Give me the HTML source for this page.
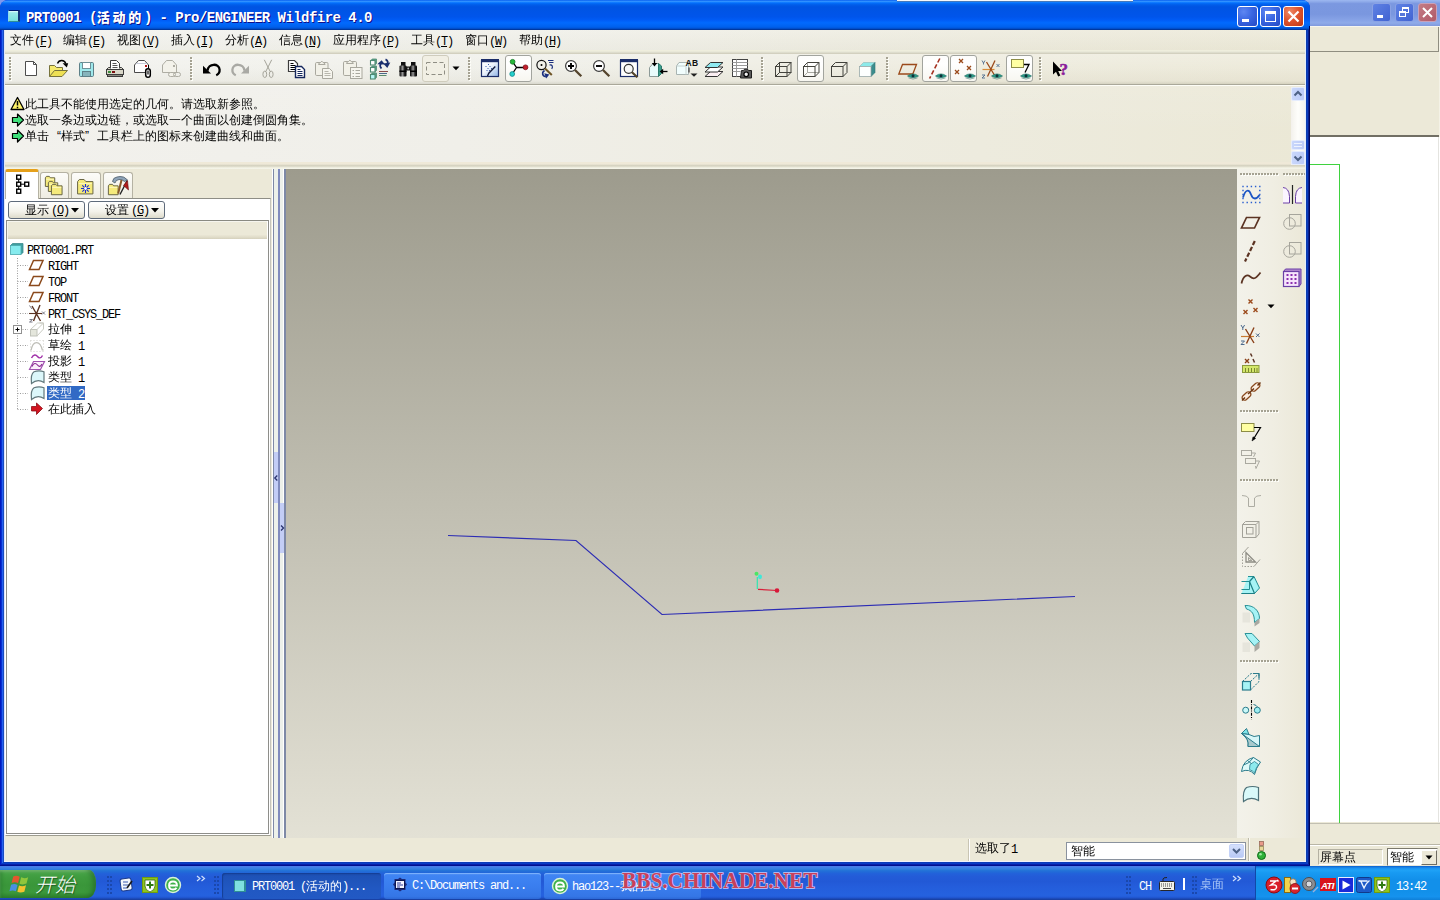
<!DOCTYPE html>
<html lang="zh-CN">
<head>
<meta charset="utf-8">
<title>PRT0001 (活动的) - Pro/ENGINEER Wildfire 4.0</title>
<style>
*{box-sizing:border-box;margin:0;padding:0}
html,body{width:1440px;height:900px;overflow:hidden;background:#ece9d8}
body{position:relative;font-family:"Liberation Sans","WenQuanYi Zen Hei","Noto Sans CJK SC",sans-serif;font-size:12px;color:#000;line-height:14px}
.abs{position:absolute}
svg{position:absolute;overflow:visible}
/* ---------- background window (right) ---------- */
#bgwin{left:1310px;top:0;width:130px;height:866px;background:#ece9d8}
#bgcorner{left:1300px;top:0;width:10px;height:26px;background:linear-gradient(#9db8f0 0,#8ba7e8 8%,#7b98e0 14%,#7a97df 55%,#86a2e6 75%,#8fabe9 88%,#8099dd 100%)}
#bgtitle{left:0;top:0;width:130px;height:26px;background:linear-gradient(#9db8f0 0,#8ba7e8 8%,#7b98e0 14%,#7a97df 55%,#86a2e6 75%,#8fabe9 88%,#8099dd 100%)}
#bgmenu{left:0;top:26px;width:129px;height:26px;background:#ece9d8;border-bottom:1px solid #8f8d80}
#bgwhite{left:0;top:137px;width:130px;height:685px;background:#fff}
#bgline{left:0;top:135px;width:129px;height:2px;background:#716f64}
/* ---------- main window ---------- */
#win{left:0;top:0;width:1310px;height:866px;background:#0831d9;border-radius:8px 8px 0 0}
#title{left:0;top:0;width:1310px;height:30px;border-radius:8px 8px 0 0;
 background:linear-gradient(#0058ee 0,#3593ff 4%,#288eff 6%,#127dff 8%,#036ffc 10%,#0262ee 14%,#0057e5 20%,#0054e3 24%,#0055eb 56%,#005bf5 66%,#026afe 76%,#0062ef 88%,#0056dc 94%,#0040ab 97%,#002e90 100%)}
#title .t{left:26px;top:10px;color:#fff;font-weight:bold;font-size:14px;line-height:16px;white-space:nowrap;text-shadow:1px 1px #0f1089;font-family:"Liberation Mono","Noto Sans CJK SC",monospace;letter-spacing:-.54px}
#title .t b{font-family:"Liberation Sans","Noto Sans CJK SC",sans-serif;font-size:13px;letter-spacing:2.7px}
#client{left:4px;top:30px;width:1302px;height:832px;background:#ece9d8}
.menu{top:33px;white-space:nowrap;font-size:12px}

/* generic text */
.m{font-family:"Liberation Mono",monospace;font-size:12px;letter-spacing:-1.2px}
.c{font-family:"Liberation Sans","WenQuanYi Zen Hei","Noto Sans CJK SC",sans-serif;font-size:12px;letter-spacing:0}
.mr{position:relative;top:1px}
.mi{position:absolute;top:33px;height:14px;white-space:nowrap;font-size:12px;line-height:14px}
.mi u{text-decoration:underline}
#menubar{left:4px;top:30px;width:1302px;height:20px;background:linear-gradient(rgba(255,255,255,.12),rgba(120,110,60,.03)),linear-gradient(90deg,#f3f3ef 0,#f0f0ea 40%,#edebde 75%,#ece9d8 100%)}
#menuline{left:4px;top:50px;width:1302px;height:4px;background:linear-gradient(#efeedd 0,#efeedd 25%,#e3e3d4 50%,#cdcab8 100%)}
#tbar{left:4px;top:54px;width:1302px;height:30px;background:linear-gradient(rgba(255,255,255,.18) 0,rgba(255,255,255,0) 45%,rgba(120,110,60,.05) 90%,rgba(90,85,50,.16) 100%),linear-gradient(90deg,#f3f3ef 0,#f0f0ea 40%,#eeecdf 75%,#edeada 100%)}
#tbline{left:4px;top:84px;width:1302px;height:2px;border-top:1px solid #aaa89a;background:#fdfdf6}
#msg{left:4px;top:86px;width:1302px;height:76px;background:linear-gradient(rgba(255,255,255,.1),rgba(255,255,255,0) 60%),linear-gradient(90deg,#f2f1ed 0,#f0efe9 35%,#edebde 75%,#ebe8d6 100%)}
#msgbot{left:4px;top:162px;width:1302px;height:7px;background:linear-gradient(#efe9d8 0,#efe9d8 28%,#dedbc9 43%,#cfccba 57%,#ecebdc 71%,#efeee0 85%,#f8f8ee 100%)}
.ml{position:absolute;left:25px;white-space:nowrap;height:14px;line-height:14px;font-size:12px}
.grip{position:absolute;width:3px;height:24px;top:57px;}
.grip::before{content:"";position:absolute;left:1px;top:1px;width:2px;height:24px;background-image:repeating-linear-gradient(#fdfdf8 0,#fdfdf8 2px,transparent 2px,transparent 3px)}
.grip::after{content:"";position:absolute;left:0;top:0;width:2px;height:24px;background-image:repeating-linear-gradient(#a5a292 0,#a5a292 2px,transparent 2px,transparent 3px)}
.pressed{position:absolute;top:55px;width:27px;height:27px;border:1px solid #a2a49e;border-radius:3px;background:linear-gradient(#fdfdfb,#fff 30%,#f7f6f0)}
.ic{position:absolute;width:24px;height:24px}
/* scrollbar of msg */
.sbtn{position:absolute;left:1291px;width:14px;height:14px;background:linear-gradient(90deg,#c9d7fb,#bccbf7);border:1px solid #e5ecfd;border-radius:2px}
/* nav panel */
#navwhite{left:5px;top:198px;width:266px;height:638px;background:#fff;border:1px solid #9d9c8f;border-top-color:#8e8e86;border-left-color:#fff;border-right-color:#c4c4bc}
#navinner{left:6px;top:239px;width:263px;height:595px;border:1px solid #8e8e8a;border-top:0;background:#fff}
#colhdr{left:6px;top:220px;width:263px;height:19px;background:linear-gradient(#ece9d8 0,#ece9d8 75%,#e0dcc9 90%,#d4d0bc 100%);border-top:1px solid #8a8a82;border-left:1px solid #8e8e8a;border-right:1px solid #8e8e8a;box-shadow:inset -1px 0 0 #fff,inset 1px 1px 0 #f6f5ee}
.btn{position:absolute;top:201px;height:18px;border:1px solid #5f6b7b;border-radius:3px;background:linear-gradient(#fff,#f3f2ea 60%,#dedbcb);white-space:nowrap;font-size:12px;line-height:15px;text-align:center}
.tab{position:absolute;top:172px;height:26px;width:31px;border:1px solid #b5b2a3;border-bottom:0;border-radius:3px 3px 0 0;background:linear-gradient(#fcfcf9,#efede2)}
.tab.sel{top:169px;height:30px;background:#fff;border-top:3px solid #f5a623;border-color:#e5a01a #b5b2a3 #fff #b5b2a3}
.tr{position:absolute;white-space:nowrap;height:14px;line-height:14px;font-size:12px}
/* sash */
.vl{position:absolute;top:169px;height:669px}
/* graphics */
#gfx{left:286px;top:169px;width:951px;height:669px;background:linear-gradient(#9d9b8d,#e3e1d5)}
#rtb{left:1237px;top:169px;width:69px;height:669px;background:linear-gradient(90deg,#f3f2ea 0,#f0eee3 50%,#ebe8d8 100%)}
.hgrip{position:absolute;height:3px}
.hgrip::before{content:"";position:absolute;left:1px;top:1px;height:2px;width:100%;background-image:repeating-linear-gradient(90deg,#fdfdf8 0,#fdfdf8 2px,transparent 2px,transparent 3px)}
.hgrip::after{content:"";position:absolute;left:0;top:0;height:2px;width:100%;background-image:repeating-linear-gradient(90deg,#a5a292 0,#a5a292 2px,transparent 2px,transparent 3px)}
/* status */
#status{left:4px;top:838px;width:1302px;height:24px;background:#ece9d8}

.wb{position:absolute;top:6px;width:21px;height:21px;border:1px solid #fff;border-radius:3px;background:radial-gradient(circle at 30% 25%,#5d86f2 0,#3a66e2 45%,#2449c4 100%)}
.wb.x{background:radial-gradient(circle at 30% 25%,#ee8a68 0,#e0552f 45%,#bd3716 100%)}
.wb2{position:absolute;top:3px;width:19px;height:19px;border:1px solid #8aa2e4;border-radius:3px;background:linear-gradient(135deg,#5f82e4,#4163d2)}
.wb2.x{background:linear-gradient(135deg,#c47c86,#b05a68);border-color:#c9a0b8}
/* ---------- taskbar ---------- */
#task{left:0;top:866px;width:1440px;height:34px;background:linear-gradient(#4a7ae8 0,#4080e8 4%,#3080e0 9%,#2474d8 13%,#216bd8 17%,#2262da 22%,#235cd8 30%,#2259d6 45%,#245ddb 60%,#2562df 86%,#245fdc 89%,#2158d4 92%,#1d4ec0 95%,#1941a5 98%)}

#start{left:0;top:870px;width:96px;height:28px;border-radius:0 7px 9px 0/0 13px 13px 0;background:linear-gradient(#5fb25c 0,#4aa54a 10%,#3f9c3f 25%,#3a963a 55%,#3c993c 80%,#2e812e 100%);box-shadow:inset -4px 0 6px -2px #246a28,inset 0 2px 3px -1px #8fd08a,inset 3px 0 4px -2px #2a7a2e}
#start .s{left:35px;top:4px;color:#fff;font-style:italic;font-size:20px;line-height:22px;font-family:"Liberation Sans","Noto Sans CJK SC",sans-serif;font-weight:300;text-shadow:1px 1px 1px #1d5a22;white-space:nowrap;letter-spacing:0}
.tbtn{position:absolute;top:873px;height:26px;border-radius:3px;color:#fff;white-space:nowrap}
.tbtn .tx{position:absolute;top:6px;height:14px;line-height:14px}
.tgrip{position:absolute;top:876px;width:5px;height:20px;background-image:radial-gradient(circle at 1px 1px,#1a48ad 0,#1a48ad 1px,transparent 1.3px);background-size:3px 4px}
#tray{left:1255px;top:866px;width:185px;height:34px;background:linear-gradient(#0c5fcb 0,#1b8ff0 6%,#1fa2f6 12%,#189af2 20%,#1290ea 40%,#1290ea 75%,#1592ee 90%,#0f7fd8 100%);border-left:1px solid #1148a8}
</style>
</head>
<body>
<div id="bgcorner" class="abs"></div>
<div class="abs" style="left:0;top:0;width:10px;height:10px;background:#7f99ee"></div>
<div id="bgwin" class="abs">
  <div id="bgtitle" class="abs"></div>
  <div id="bgmenu" class="abs"></div>
  <div id="bgline" class="abs"></div>
  <div id="bgwhite" class="abs"></div>

  <div class="abs" style="left:0;top:26px;width:130px;height:1px;background:#f7f6ee"></div>
  <div class="abs" style="left:128px;top:27px;width:1px;height:25px;background:#8f8d80"></div>
  <div class="abs" style="left:129px;top:27px;width:1px;height:110px;background:#f4f2e6"></div>
  <div class="abs" style="left:128px;top:137px;width:1px;height:686px;background:#e4e4e0"></div>
  <div class="wb2" style="left:62px"><div class="abs" style="left:4px;top:11px;width:6px;height:3px;background:#fff"></div></div>
  <div class="wb2" style="left:85px"><div class="abs" style="left:6px;top:3px;width:7px;height:6px;border:1px solid #fff;border-top-width:2px"></div><div class="abs" style="left:3px;top:7px;width:7px;height:6px;border:1px solid #fff;border-top-width:2px;background:#5878da"></div></div>
  <div class="wb2 x" style="left:108px"><svg width="17" height="17" viewBox="0 0 17 17" style="left:0;top:0"><path d="M4,4L13,13M13,4L4,13" stroke="#fff" stroke-width="2"/></svg></div>
  <div class="abs" style="left:0;top:164px;width:30px;height:1px;background:#3fd23f"></div>
  <div class="abs" style="left:29px;top:164px;width:1px;height:659px;background:#3fd23f"></div>
  <div class="abs" style="left:0;top:823px;width:130px;height:1px;background:#c2c0b2"></div>
  <div class="abs" style="left:0;top:844px;width:130px;height:2px;border-top:1px solid #b9b6a6;border-bottom:1px solid #fff"></div>
  <div class="abs" style="left:8px;top:849px;width:65px;height:16px;border:1px solid #b4b1a2;border-right-color:#fff;border-bottom-color:#fff"></div>
  <div class="tr c" style="left:10px;top:850px">屏幕点</div>
  <div class="abs" style="left:77px;top:848px;width:51px;height:18px;background:#fff;border:1px solid #7b796c;border-right-color:#e8e6da;border-bottom-color:#e8e6da"></div>
  <div class="tr c" style="left:80px;top:850px">智能</div>
  <div class="abs" style="left:111px;top:850px;width:16px;height:15px;background:#ece9d8;border:1px solid #fff;border-right-color:#6f6d62;border-bottom-color:#6f6d62"><svg width="14" height="13" viewBox="0 0 14 13" style="left:0;top:0"><path d="M3.500,4.500H10.500L7,8.500Z" fill="#000"/></svg></div>
</div>
<div id="win" class="abs">
  <div id="title" class="abs"><span class="abs t" id="ttxt">PRT0001 (<b>活动的</b>) - Pro/ENGINEER Wildfire 4.0</span></div>
  
<div class="abs" style="left:8px;top:10px;width:12px;height:12px;background:linear-gradient(#e8ffff 0,#9aeaea 18%,#78e0dc 100%);border:1px solid #2f8f95;border-top-color:#001a70;border-left-color:#8fd8ee;border-right:2px solid #12357c;border-radius:1px"></div>
<div class="wb" style="left:1237px"><div class="abs" style="left:4px;top:12px;width:7px;height:3px;background:#fff"></div></div>
<div class="wb" style="left:1260px"><div class="abs" style="left:4px;top:4px;width:11px;height:11px;border:1px solid #fff;border-top-width:3px"></div></div>
<div class="wb x" style="left:1283px"><svg width="19" height="19" viewBox="0 0 19 19" style="left:0;top:0"><path d="M4.500,4.500L14.500,14.500M14.500,4.500L4.500,14.500" stroke="#fff" stroke-width="2.200"/></svg></div>
<div id="client" class="abs"></div>

<!-- menu bar -->
<div id="menubar" class="abs"></div>
<div class="mi" style="left:10px"><span class="c">文件</span><span class="m mr">(<u>F</u>)</span></div>
<div class="mi" style="left:63px"><span class="c">编辑</span><span class="m mr">(<u>E</u>)</span></div>
<div class="mi" style="left:117px"><span class="c">视图</span><span class="m mr">(<u>V</u>)</span></div>
<div class="mi" style="left:171px"><span class="c">插入</span><span class="m mr">(<u>I</u>)</span></div>
<div class="mi" style="left:225px"><span class="c">分析</span><span class="m mr">(<u>A</u>)</span></div>
<div class="mi" style="left:279px"><span class="c">信息</span><span class="m mr">(<u>N</u>)</span></div>
<div class="mi" style="left:333px"><span class="c">应用程序</span><span class="m mr">(<u>P</u>)</span></div>
<div class="mi" style="left:411px"><span class="c">工具</span><span class="m mr">(<u>T</u>)</span></div>
<div class="mi" style="left:465px"><span class="c">窗口</span><span class="m mr">(<u>W</u>)</span></div>
<div class="mi" style="left:519px"><span class="c">帮助</span><span class="m mr">(<u>H</u>)</span></div>

<div id="menuline" class="abs"></div>
<div id="tbar" class="abs"></div>
<div id="tbline" class="abs"></div>
<div class="grip" style="left:9px"></div><div class="grip" style="left:190px"></div><div class="grip" style="left:468px"></div><div class="grip" style="left:761px"></div><div class="grip" style="left:886px"></div><div class="grip" style="left:1039px"></div>
<div class="pressed" style="left:505px"></div><div class="pressed" style="left:797px"></div><div class="pressed" style="left:922px"></div><div class="pressed" style="left:950px"></div><div class="pressed" style="left:1006px"></div>
<div class="pressed" style="left:422px;background:#f1efe4;border-color:#cfccbd"></div>
<svg id="tbicons" width="1310" height="90" viewBox="0 0 1310 90" style="left:0;top:0" fill="none" stroke-linecap="butt">
<defs>
<g id="eye"><path d="M-5.500,0 Q0,-4.200 5.500,0 Q0,3.400 -5.500,0Z" fill="#2a9c88" stroke="#176a60" stroke-width=".6"/><circle cx="0" cy="-.2" r="1.500" fill="#0d3038"/><path d="M-4.600,1.800 Q0,4.400 4.600,1.800" stroke="#5a8a84" stroke-width=".7"/></g>
<linearGradient id="gRp" x1="0" y1="0" x2="1" y2="1"><stop offset="0" stop-color="#fff"/><stop offset=".45" stop-color="#eef4fc"/><stop offset="1" stop-color="#8fb4e6"/></linearGradient>
<linearGradient id="gBar" x1="0" y1="0" x2="1" y2="0"><stop offset="0" stop-color="#000"/><stop offset=".45" stop-color="#9a9a9a"/><stop offset=".7" stop-color="#222"/><stop offset="1" stop-color="#000"/></linearGradient>
</defs>
<!-- new -->
<path d="M25.5,61.5H33.5L36.5,64.5V75.5H25.5Z" fill="#fff" stroke="#4d4d4d"/><path d="M33.5,61.5V64.5H36.5" stroke="#4d4d4d"/>
<!-- open -->
<path d="M49.5,76.5V65.5H54.5L56.5,67.5H62.5V70.5" fill="#f6ea6e" stroke="#77733c"/>
<path d="M49.5,76.5L54.5,70.5H67.5L62,76.5Z" fill="#eee054" stroke="#77733c"/>
<path d="M57.5,63.5C59,59.5 64.5,59.5 65.8,63.6" stroke="#000" stroke-width="1.4"/><path d="M62.6,63.2H68.2L66.8,67.4Z" fill="#000"/>
<!-- save -->
<rect x="79.5" y="62.5" width="14" height="14" rx="1.2" fill="#9fe9ec" stroke="#5d8088"/>
<rect x="82.5" y="62.5" width="8" height="6" fill="#fff" stroke="#6f9298"/>
<rect x="82.5" y="71.5" width="8" height="5" fill="#86b4bc" stroke="#5d8088"/>
<!-- print -->
<path d="M110.500,68.500V60.500H116.500L119.500,63.500V68.500" fill="#fff" stroke="#3c3c3c"/>
<path d="M112.500,63.500h4M112.500,65.500h5M112.500,67.500h5" stroke="#555"/>
<path d="M106.500,74.500V69.500L108.500,67.500H110.500M119.500,67.500H121.500L123.500,69.500V74.500" fill="#d9d7c8" stroke="#3c3c3c"/>
<rect x="106.500" y="69.500" width="17" height="5" fill="#d9d7c8" stroke="#3c3c3c"/>
<rect x="107.500" y="74.500" width="15" height="2" fill="#8c8c80" stroke="#3c3c3c"/>
<rect x="108" y="71" width="3" height="2" fill="#3c8c3c"/><rect x="112" y="71" width="3" height="2" fill="#7a1010"/>
<!-- mail attach -->
<path d="M134.500,72.500V65.000L138.500,60.500H144.500L148.500,65.000V72.500Z" fill="#fff" stroke="#4a4a4a"/>
<path d="M136,63.500H147" stroke="#c8ccd8"/>
<rect x="145" y="65" width="2" height="2" fill="#b01818"/>
<path d="M148.500,65V68" stroke="#000"/>
<rect x="145.700" y="68.700" width="4.600" height="8.600" rx="2.300" fill="#fff" stroke="#000" stroke-width="1.500"/>
<path d="M148,70.500V74.500" stroke="#000" stroke-width="1.200"/>
<!-- mail link disabled -->
<path d="M162.500,72.500V65.000L166.500,60.500H172.500L176.500,65.000V72.500Z" fill="#f3f2ea" stroke="#aeada3"/>
<rect x="173" y="65" width="2" height="2" fill="#aeada3"/>
<rect x="168.500" y="72.500" width="7" height="4" rx="2" fill="#f3f2ea" stroke="#aeada3"/>
<rect x="173.500" y="72.500" width="7" height="4" rx="2" fill="none" stroke="#aeada3"/>
<!-- undo -->
<path d="M207.600,70.600C208,63.200 219.200,62.800 219.600,69.600C219.800,72.600 218.200,74.300 216.200,75.200" stroke="#000" stroke-width="2.300"/>
<path d="M203,65.800V73.600H211Z" fill="#000"/>
<!-- redo -->
<path d="M244.400,70.600C244,63.200 232.800,62.800 232.400,69.600C232.200,72.600 233.800,74.300 235.800,75.200" stroke="#a9a9a4" stroke-width="2.300"/>
<path d="M249,65.800V73.600H241Z" fill="#a9a9a4"/>
<!-- cut -->
<path d="M264.300,59.800L270.200,71.500M271.700,59.800L265.800,71.500" stroke="#a5a49a"/>
<ellipse cx="264.800" cy="74.300" rx="1.900" ry="3.200" stroke="#a5a49a"/><ellipse cx="271.200" cy="74.300" rx="1.900" ry="3.200" stroke="#a5a49a"/>
<!-- copy -->
<path d="M288.500,60.500H294.500L297.500,63.500V71.500H288.500Z" fill="#fff" stroke="#3c3c3c" stroke-width="1.200"/>
<path d="M290.500,63.500h3M290.500,65.500h5M290.500,67.500h5M290.500,69.500h5" stroke="#000"/>
<path d="M295.500,66.500H301.500L304.500,69.500V77.500H295.500Z" fill="#fff" stroke="#15275c" stroke-width="1.400"/>
<path d="M297.500,69.500h3M297.500,71.500h5M297.500,73.500h5M297.500,75.500h5" stroke="#15275c"/>
<!-- paste disabled -->
<rect x="315.500" y="62.500" width="12.500" height="13" rx="1.200" fill="#f2f1e8" stroke="#a9a89e"/>
<path d="M318.500,64.500Q319,62.500 320.500,62.500Q321.800,59.800 323.100,62.500Q324.600,62.500 325.100,64.500Z" fill="#f2f1e8" stroke="#a9a89e"/>
<path d="M322.500,68.500H329.500L332.500,71.500V78.500H322.500Z" fill="#f6f5ee" stroke="#a9a89e"/>
<path d="M324.500,71.500h4M324.500,73.500h6M324.500,75.500h6" stroke="#b8b7ad"/>
<!-- paste special disabled -->
<rect x="343.500" y="61.500" width="13" height="14" rx="1.200" fill="#f2f1e8" stroke="#a9a89e"/>
<path d="M346.500,63.500Q347,61.500 348.500,61.500Q349.900,58.800 351.300,61.500Q352.800,61.500 353.300,63.500Z" fill="#f2f1e8" stroke="#a9a89e"/>
<rect x="350.500" y="67.500" width="11.500" height="11" fill="#f6f5ee" stroke="#a9a89e"/>
<path d="M352.500,70.500h1.500M355.500,70.500h4.500M352.500,73.500h1.500M355.500,73.500h4.500M352.500,76.500h1.500M355.500,76.500h4.500" stroke="#a9a89e"/>
<!-- regen manager -->
<g stroke="#4d8a72" fill="#fff" stroke-width="1.100"><path d="M371,60.500l1.200,-1.500h4.300v4.300l-1.200,1.500" fill="#5fa48c" stroke-width=".8"/><rect x="370.500" y="60.500" width="4.500" height="4.500"/>
<path d="M371,67.500l1.200,-1.500h4.300v4.300l-1.200,1.500" fill="#5fa48c" stroke-width=".8"/><rect x="370.500" y="67.500" width="4.500" height="4.500"/>
<path d="M371,74.500l1.200,-1.500h4.300v4.300l-1.200,1.500" fill="#5fa48c" stroke-width=".8"/><rect x="370.500" y="74.500" width="4.500" height="4.500" fill="#b4f6f6"/></g>
<path d="M381.500,68.500C379.500,66.500 379.800,64 381.800,63" stroke="#1a2f6e" stroke-width="1.800"/><path d="M377.300,64.300L381.600,60.200L385,64.600Z" fill="#1a2f6e"/>
<path d="M385.500,59.400C388,60.500 388.400,63 386.800,64.500" stroke="#1a2f6e" stroke-width="1.800"/><path d="M383.200,63.400L390.300,62.500L387.300,68Z" fill="#1a2f6e"/>
<path d="M379,71.500h9" stroke="#8a4a4a"/><path d="M379,73.500h8" stroke="#4a6a8a"/><path d="M379,75.500h7.500" stroke="#5a8a6a"/>
<!-- binoculars -->
<rect x="401" y="62" width="4.500" height="5" fill="#111"/><rect x="411" y="62" width="4.500" height="5" fill="#111"/>
<rect x="399.500" y="65.500" width="7" height="11" rx="1" fill="url(#gBar)"/><rect x="410" y="65.500" width="7" height="11" rx="1" fill="url(#gBar)"/>
<rect x="399.500" y="70.500" width="7" height="1.500" fill="#000"/><rect x="410" y="70.500" width="7" height="1.500" fill="#000"/>
<rect x="406" y="66.500" width="4.500" height="4" fill="#111"/><circle cx="408.200" cy="68.500" r=".9" fill="#bbb"/>
<!-- select -->
<rect x="426.500" y="62.500" width="18" height="12" stroke="#8f8e84" stroke-dasharray="4 2.500"/>
<path d="M452.500,66.500H459.500L456,70.200Z" fill="#000"/>
<!-- repaint -->
<rect x="481.500" y="60.500" width="17" height="16" fill="url(#gRp)" stroke="#1b2d69" stroke-width="1.200"/><rect x="481" y="59" width="18" height="3.200" fill="#1b2d69"/>
<path d="M487.500,76L488.800,73.200L495.300,66.500" stroke="#10183a" stroke-width="1.400"/>
<path d="M485.500,66.500h1M487.500,68.500h1M489.500,66.500h1M486.500,70.500h1M489,70.500h1M491,68.500h1M488,64.500h1" stroke="#3f5fa8"/>
<!-- spin center -->
<path d="M512.600,61.800L516.500,67.500L512.200,74M516.500,67.500H525" stroke="#000" stroke-width="1.300"/>
<circle cx="512.600" cy="61.800" r="2.400" fill="#27b83a" stroke="#0f7a20" stroke-width=".8"/>
<circle cx="512.200" cy="74" r="2.400" fill="#25d0cc" stroke="#108a8a" stroke-width=".8"/>
<circle cx="525.500" cy="67.300" r="2.400" fill="#c41f2e" stroke="#7a0f18" stroke-width=".8"/>
<!-- orient mode -->
<circle cx="541.500" cy="65" r="4.600" stroke="#111" stroke-width="1.200"/><circle cx="541.500" cy="65" r="1" fill="#000"/>
<path d="M545,68.500L551.800,75" stroke="#6e5526" stroke-width="2"/>
<path d="M548,60.500h5.500M549,62.500h4.500" stroke="#1a2f7e"/><path d="M549.500,65c3,-.6 3.600,2 2.200,3.800" stroke="#1a2f7e" stroke-width="1.200"/>
<path d="M544.500,70.500C541.500,72.500 542.200,76.300 545.800,76.800" stroke="#1a2f7e" stroke-width="1.600"/><path d="M544.300,73.200L549.300,74.600L546.200,78.400Z" fill="#1a2f7e"/>
<!-- zoom in -->
<circle cx="571" cy="66" r="5.400" fill="#fff" stroke="#3a3a3a" stroke-width="1.200"/><path d="M568,66h6M571,63v6" stroke="#000" stroke-width="1.900"/>
<path d="M575,70L581.300,76.300" stroke="#54442c" stroke-width="2.300"/>
<!-- zoom out -->
<circle cx="599" cy="66" r="5.400" fill="#fff" stroke="#3a3a3a" stroke-width="1.200"/><path d="M596,66h6" stroke="#000" stroke-width="1.900"/>
<path d="M603,70L609.300,76.300" stroke="#54442c" stroke-width="2.300"/>
<!-- refit -->
<rect x="620.500" y="60.500" width="17" height="16" fill="#fff" stroke="#1b2d69" stroke-width="1.200"/><rect x="620" y="59" width="18" height="3.200" fill="#1b2d69"/>
<circle cx="628.700" cy="68.800" r="4.500" fill="#f7f7f7" stroke="#333" stroke-width="1.200"/><path d="M632,72.200L637.300,77.300" stroke="#54442c" stroke-width="2.200"/>
<!-- reorient -->
<path d="M649.500,76.500V67.500L653,63.500H658.500V76.500Z" fill="#e9fbfb" stroke="#8d9a98"/>
<path d="M658.500,63.500L661.500,66V73.500L658.500,76.500Z" fill="#3d9c8c" stroke="#2a7a6c"/>
<path d="M654.500,58.500V64" stroke="#000" stroke-width="1.300"/><path d="M651.800,63H657.200L654.500,66.400Z" fill="#000"/>
<path d="M667.500,71.500H662.500" stroke="#000" stroke-width="1.300"/><path d="M663.200,68.800V74.200L659.600,71.500Z" fill="#000"/>
<!-- saved view list -->
<path d="M676.500,74.500V66L679,62.500H688.500V74.500Z" fill="#f1fdfd" stroke="#a9b4b2"/><path d="M676.500,66H686L688.500,62.500M686,66V74.500" stroke="#c5d2d0"/>
<rect x="688" y="67.500" width="1.800" height="5" fill="#6a6a6a"/>
<text x="685.500" y="66" font-family="Liberation Sans,sans-serif" font-size="8.500" font-weight="bold" fill="#111" stroke="none" letter-spacing=".4">AB</text>
<path d="M690.500,73.500H697.500L694,76.800Z" fill="#222"/>
<!-- layers -->
<path d="M710.500,71.500H723L717.500,76.500H705Z" fill="#fbeef2" stroke="#333"/>
<path d="M710.500,67H723L717.500,72H705Z" fill="#fff" stroke="#333"/>
<path d="M710.500,62.500H723L717.500,67.500H705Z" fill="#8fe9f0" stroke="#333"/>
<!-- view manager -->
<rect x="732.500" y="59.500" width="15" height="17" fill="#fff" stroke="#444"/>
<path d="M732.500,62.500h15M732.500,65.500h15M732.500,68.500h15M732.500,71.500h8M736.500,59.500v17" stroke="#9a9a9a"/>
<path d="M741.500,70.500h2l1,-1.300h3l1,1.300h3v7.500h-11z" fill="#5a5a5a" stroke="#1e1e1e"/><circle cx="746.200" cy="74.300" r="2.300" fill="#f2f2f2" stroke="#000" stroke-width="1.200"/>
<!-- wireframe cube -->
<g stroke="#43433d" stroke-width="1"><rect x="775.500" y="66.500" width="11.500" height="10"/><rect x="779.500" y="62.500" width="11.500" height="10"/><path d="M775.500,66.500l4,-4M787,66.500l4,-4M775.500,76.500l4,-4M787,76.500l4,-4"/></g>
<!-- hidden line cube -->
<g stroke-width="1"><path d="M807.500,62.500V72.500H819M803.500,76.500l4,-4" stroke="#a7a7a0"/><g stroke="#43433d"><rect x="803.500" y="66.500" width="11.500" height="10"/><path d="M803.500,66.500l4,-4H819V72.500l-4,4M815,66.500l4,-4"/></g></g>
<!-- no hidden cube -->
<g stroke="#43433d" stroke-width="1"><rect x="831.500" y="66.500" width="11.500" height="10"/><path d="M831.500,66.500l4,-4H847V72.500l-4,4M843,66.500l4,-4"/></g>
<!-- shaded cube -->
<path d="M859.500,66.500l4,-4H875l-4,4Z" fill="#8deaea" stroke="#8fb9b9" stroke-width=".6"/>
<path d="M871,66.500l4,-4V72.500l-4,4Z" fill="#3b8d8d" stroke="#2d7272" stroke-width=".6"/>
<rect x="859.500" y="66.500" width="11.500" height="10" fill="#fdffff" stroke="#9aa" stroke-width=".8"/>
<!-- datum plane display -->
<path d="M902.500,64.500H916.500L912.800,74H898.800Z" stroke="#9b4a1b" stroke-width="1.300"/><use href="#eye" x="913" y="76"/>
<!-- axis display -->
<path d="M939.800,58.500L929.600,78.500" stroke="#a53221" stroke-width="1.600" stroke-dasharray="4.500 2.200"/><use href="#eye" x="941" y="76"/>
<!-- point display -->
<path d="M959,59l4,4m0,-4l-4,4M967,66l4,4m0,-4l-4,4M955,70l4,4m0,-4l-4,4" stroke="#9b4a1b" stroke-width="1.300"/><use href="#eye" x="970" y="76"/>
<!-- csys display -->
<path d="M982.500,69.500H994.500" stroke="#d88a36" stroke-width="1.200"/><path d="M986.500,62L995,76M995,60.500L987.500,76.500" stroke="#9b4a1b" stroke-width="1.300"/>
<path d="M982,60.500l1.500,2.500l1.500,-2.500M983.500,63v1.500M982,75h3l-3,3h3M996.500,64l3,3m0,-3l-3,3" stroke="#4d6b8d" stroke-width=".9"/><use href="#eye" x="997" y="76"/>
<!-- annotation display -->
<rect x="1011.500" y="59.500" width="12" height="8" fill="#ffffa2" stroke="#8d8d46"/><path d="M1024,64.500h5l-4,8" stroke="#000" stroke-width="1.300"/><use href="#eye" x="1026" y="76"/>
<!-- help -->
<path d="M1053,61.500V74.500L1056,71.800L1058.200,76.600L1060.300,75.600L1058.200,71H1062Z" fill="#000"/>
<text x="1059.500" y="75" font-family="Liberation Serif,serif" font-size="17" font-weight="bold" fill="#8a1a9a" stroke="#8a1a9a" stroke-width=".5">?</text>
</svg>

<!-- TOOLBAR-ICONS-END -->
<!-- message area -->
<div id="msg" class="abs"></div>
<div id="msgbot" class="abs"></div>
<div class="ml c" style="top:97px">此工具不能使用选定的几何。请选取新参照。</div>
<div class="ml c" style="top:113px">选取一条边或边链，或选取一个曲面以创建倒圆角集。</div>
<div class="ml c" style="top:129px">单击<span style="padding:0 0 0 8px">“</span>样式<span style="padding:0 8px 0 0">”</span>工具栏上的图标来创建曲线和曲面。</div>
<svg id="msgicons" width="30" height="60" viewBox="0 90 30 60" style="left:0;top:91px" fill="none">
<path d="M17.500,96.500L24,108.500H11Z" fill="#fff36a" stroke="#000" stroke-width="1.300" stroke-linejoin="round"/>
<path d="M17.500,100v4.500M17.500,105.800v1.400" stroke="#000" stroke-width="1.500"/>
<path d="M12.500,116.500H17.500V113L23.500,119L17.500,125V121.500H12.500Z" fill="#3fe07a" stroke="#000" stroke-width="1.200" stroke-linejoin="round"/>
<path d="M12.500,132.500H17.500V129L23.500,135L17.500,141V137.500H12.500Z" fill="#3fe07a" stroke="#000" stroke-width="1.200" stroke-linejoin="round"/>
</svg>
<div class="abs" style="left:1291px;top:87px;width:14px;height:78px;background:linear-gradient(90deg,#f3f1ec,#fefefb 50%,#f4f3ee)"></div>
<div class="sbtn" style="top:87px"><svg width="12" height="12" viewBox="0 0 12 12" style="left:0;top:0" fill="none"><path d="M2.500,7.500L6,4L9.500,7.500" stroke="#4d6185" stroke-width="2"/></svg></div>
<div class="sbtn" style="top:151px"><svg width="12" height="12" viewBox="0 0 12 12" style="left:0;top:0" fill="none"><path d="M2.500,4.500L6,8L9.500,4.500" stroke="#4d6185" stroke-width="2"/></svg></div>
<div class="sbtn" style="top:140px;height:10px"><div class="abs" style="left:2px;top:2px;width:8px;height:4px;border-top:1px solid #eef3fe;border-bottom:1px solid #eef3fe"></div></div>
<!-- nav panel -->
<div id="navwhite" class="abs"></div>
<div class="tab sel" style="left:5px;width:34px"></div>
<div class="tab" style="left:40px;width:29px"></div>
<div class="tab" style="left:71px;width:30px"></div>
<div class="tab" style="left:103px;width:30px"></div>
<div class="btn" style="left:8px;width:77px"><span class="abs c" style="left:16px;top:1px">显示</span><span class="abs m" style="left:42px;top:2px">(<u>O</u>)</span><svg width="8" height="5" viewBox="0 0 8 5" style="left:62px;top:6px"><path d="M0,0H8L4,4.500Z" fill="#000"/></svg></div>
<div class="btn" style="left:88px;width:77px"><span class="abs c" style="left:16px;top:1px">设置</span><span class="abs m" style="left:42px;top:2px">(<u>G</u>)</span><svg width="8" height="5" viewBox="0 0 8 5" style="left:62px;top:6px"><path d="M0,0H8L4,4.500Z" fill="#000"/></svg></div>
<div id="colhdr" class="abs"></div>
<div id="navinner" class="abs"></div>
<svg id="navicons" width="280" height="260" viewBox="0 160 280 260" style="left:0;top:160px" fill="none">
<defs>
<g id="pl"><path d="M4.500,.5H14L10,9.500H.5Z" stroke="#8b4a1c" stroke-width="1.500"/></g>
<g id="sty"><path d="M1.500,13.500Q.5,4 4,1.800Q9,-.2 14,1.800V12.500Q7.500,8.500 1.500,13.500Z" fill="#dcf7fa" stroke="#62787c" stroke-width="1.200"/></g>
<g id="fold"><path d="M.5,14.500V2.500L2,.5H6L7.500,2.500H13.500V14.500Z" fill="#f5ea7c" stroke="#6a6746" vector-effect="non-scaling-stroke"/><path d="M1.500,4.500H12.500" stroke="#fdf8c0" vector-effect="non-scaling-stroke"/></g>
</defs>
<!-- tab 1 tree icon -->
<g stroke="#000" stroke-width="1.400"><rect x="16.700" y="175.200" width="4" height="4" fill="#fff"/><rect x="16.700" y="182.200" width="4" height="4" fill="#fff"/><rect x="16.700" y="189.200" width="4" height="4" fill="#fff"/><rect x="24.700" y="182.200" width="4" height="4" fill="#fff"/></g>
<path d="M18.700,179.500v3M18.700,186.500v3M21,184.200h3.500" stroke="#000"/>
<!-- tab 2 folders -->
<g transform="translate(45,176) scale(.72)"><use href="#fold"/></g>
<g transform="translate(48,181) scale(.72)"><use href="#fold"/></g>
<g transform="translate(51,184) scale(.82 .74)"><use href="#fold"/></g>
<!-- tab 3 favorites -->
<g transform="translate(77,179) scale(1.18 1.03)"><use href="#fold"/></g>
<path d="M85.500,184v9M81,188.500h9M82.300,185.300l6.400,6.400M88.700,185.300l-6.400,6.400" stroke="#1a2fd0" stroke-width="1.100"/><circle cx="85.500" cy="188.500" r="1.400" fill="#fff"/>
<!-- tab 4 connections -->
<g transform="translate(108,184) scale(.75 .74)"><use href="#fold"/></g>
<path d="M112.500,181.500Q113,177.500 117,177L120,176.500Q124,176 127.500,180L124.500,181.500Q122,179 119,179.500Q115.500,180 115,183Z" fill="#8fa4b8" stroke="#4a5a6a" stroke-width=".8"/>
<path d="M121.500,180L118.200,193.500" stroke="#8a5a2a" stroke-width="2"/>
<path d="M127,181L120,194.500" stroke="#222" stroke-width="1.400"/><path d="M123.500,185.500L127.500,180.500L128.500,190Z" fill="#b01c1c" stroke="#6a1010" stroke-width=".6"/>
<!-- tree connectors -->
<path d="M17.500,258V409.500M17.500,265.500H28M17.500,281.500H28M17.500,297.500H28M17.500,313.500H28M22.500,329.500H28M17.500,345.500H28M17.500,361.500H28M17.500,377.500H28M17.500,393.500H28M17.500,409.500H28" stroke="#9c9c9c" stroke-dasharray="1 1.500"/>
<!-- part icon -->
<path d="M10.500,245.500L12.500,243.500H23V252.500L21,254.500Z" fill="#3f9e9e" stroke="#3d8d90" stroke-width=".8"/>
<rect x="10.500" y="245.500" width="10.500" height="9" fill="#86ebee" stroke="#4ba9ad" stroke-width=".8"/>
<!-- planes -->
<use href="#pl" x="29" y="260"/><use href="#pl" x="29" y="276"/><use href="#pl" x="29" y="292"/>
<!-- csys -->
<path d="M29,313.500H42" stroke="#5b3322" stroke-width="1.100"/><path d="M32,306L40.500,321M40,305L33.500,321" stroke="#5b3322" stroke-width="1.400"/>
<path d="M29.500,305.500l2.500,3.500M29.500,319.500h3l-3,2.500h3M42,311.500l3,3m0,-3l-3,3" stroke="#6a6a78" stroke-width=".9"/>
<!-- plus box -->
<rect x="13.500" y="325.500" width="8" height="8" fill="#fff" stroke="#919191"/><path d="M15.500,329.500h4M17.500,327.500v4" stroke="#000"/>
<!-- extrude faded -->
<rect x="30.500" y="329.500" width="6.500" height="6.500" fill="#e4e6dc" stroke="#c1c3ba"/><path d="M30.500,329.500l7,-6.500h6v6l-6.500,7M37,329.500l6,-6M39.500,323h4v4" stroke="#c9cbc2"/>
<!-- sketch faded -->
<path d="M31,350.500C33,340 40,340 42.500,350.500" stroke="#bdbdb6" stroke-width="1.200"/><path d="M30.500,340.500h13M30.500,351.500h13M30.500,340.500v11M43.500,340.500v11" stroke="#d0d0ca" stroke-dasharray="1 2"/>
<!-- project -->
<path d="M31.500,358C33.500,354 36,354.500 37.500,356.500S41,358.500 42.500,355.500" stroke="#a030a8" stroke-width="1.400"/>
<path d="M33.500,361.500H44.500L40.500,369.500H29.500Z" fill="#fbeffc" stroke="#a052b0" stroke-width="1.200"/><path d="M32,366.500C33.500,362.500 36,363 37.500,365S40.500,367 42,364" stroke="#8a2a92" stroke-width="1.200"/>
<!-- style 1, 2 -->
<use href="#sty" x="30" y="370"/><use href="#sty" x="30" y="386"/>
<!-- insert arrow -->
<path d="M31.500,406.500H36.500V403L42.500,408.500L36.500,414.500V411H31.500Z" fill="#d31420" stroke="#8c0c14" stroke-width=".8"/>
</svg>

<div class="tr m" style="left:27px;top:244px">PRT0001.PRT</div>
<div class="tr m" style="left:48px;top:260px">RIGHT</div>
<div class="tr m" style="left:48px;top:276px">TOP</div>
<div class="tr m" style="left:48px;top:292px">FRONT</div>
<div class="tr m" style="left:48px;top:308px">PRT_CSYS_DEF</div>
<div class="tr" style="left:48px;top:322px"><span class="c">拉伸</span><span class="m mr" style="padding-left:6px">1</span></div>
<div class="tr" style="left:48px;top:338px"><span class="c">草绘</span><span class="m mr" style="padding-left:6px">1</span></div>
<div class="tr" style="left:48px;top:354px"><span class="c">投影</span><span class="m mr" style="padding-left:6px">1</span></div>
<div class="tr" style="left:48px;top:370px"><span class="c">类型</span><span class="m mr" style="padding-left:6px">1</span></div>
<div class="abs" style="left:47px;top:386px;width:38px;height:14px;background:#316ac5"></div>
<div class="tr" style="left:48px;top:386px;color:#fff"><span class="c">类型</span><span class="m mr" style="padding-left:6px">2</span></div>
<div class="tr c" style="left:48px;top:402px">在此插入</div>
<!-- TREE-END -->
<!-- sash -->
<div class="vl" style="left:272px;width:1px;background:#fff"></div>
<div class="vl" style="left:273px;width:1px;background:#7e89a6"></div>
<div class="vl" style="left:274px;width:4px;background:#edf1ea"></div>
<div class="vl" style="left:278px;width:2px;background:#808bbd"></div>
<div class="vl" style="left:280px;width:3px;background:#edf0ea"></div>
<div class="vl" style="left:283px;width:1px;background:#fff"></div>
<div class="vl" style="left:284px;width:2px;background:#7e89a6"></div>
<div class="abs" style="left:274px;top:452px;width:4px;height:51px;background:#c3cdf6"></div>
<div class="abs" style="left:280px;top:503px;width:4px;height:50px;background:#c3cdf6"></div>
<svg width="14" height="110" viewBox="272 450 14 110" style="left:272px;top:450px" fill="none"><path d="M277.300,475.500L274.800,478L277.300,480.500" stroke="#2a3470" stroke-width="1.300"/><path d="M281,525.500L283.500,528L281,530.500" stroke="#2a3470" stroke-width="1.300"/></svg>
<!-- graphics -->
<div id="gfx" class="abs">
<svg width="951" height="669" viewBox="286 169 951 669" style="left:0;top:0">
<polyline points="448,535.500 576,540.500 662,614.500 1075,596.500" fill="none" stroke="#2c2cb4" stroke-width="1.150"/>
<path d="M757.300,577V589" stroke="#2fe6b0" stroke-width="1.200" fill="none"/>
<path d="M758,589.300L777,590.500" stroke="#d8203a" stroke-width="1.200" fill="none"/>
<circle cx="756.500" cy="573.800" r="2" fill="#4ae664"/>
<ellipse cx="760" cy="576.800" rx="2" ry="2.400" fill="#3fe8d8"/>
<circle cx="777" cy="590.500" r="2.300" fill="#d81838"/>
</svg>
</div>
<div id="rtb" class="abs"></div>
<div class="hgrip" style="left:1240px;top:173px;width:38px"></div>
<div class="hgrip" style="left:1283px;top:173px;width:22px"></div>
<div class="hgrip" style="left:1240px;top:410px;width:38px"></div>
<div class="hgrip" style="left:1240px;top:479px;width:38px"></div>
<div class="hgrip" style="left:1240px;top:660px;width:38px"></div>
<svg id="rtbicons" width="74" height="670" viewBox="1236 168 74 670" style="left:1236px;top:168px" fill="none">
<!-- sketch -->
<path d="M1242.3,186.5h1.4M1246.5,186.5h1.4M1250.7,186.5h1.4M1254.9,186.5h1.4M1259.1,186.5h1.4M1242.3,202.5h1.4M1246.5,202.5h1.4M1250.7,202.5h1.4M1254.9,202.5h1.4M1259.1,202.5h1.4M1242.3,190.5h1.4M1242.3,194.5h1.4M1242.3,198.5h1.4M1259.1,190.5h1.4M1259.1,194.5h1.4M1259.1,198.5h1.4" stroke="#2a5fd0" stroke-width="1.400"/>
<path d="M1243,197.500C1245.500,189 1249,189 1251,194.500S1256.500,199.500 1259.500,195" stroke="#1c55c4" stroke-width="1.800"/>
<!-- plane -->
<path d="M1246.500,217.500H1259.500L1254.500,228H1241.500Z" stroke="#5b3322" stroke-width="1.700"/>
<!-- axis -->
<path d="M1254.800,241L1245,261.500" stroke="#5b3322" stroke-width="2.200" stroke-dasharray="4.500 2"/>
<!-- curve -->
<path d="M1241.500,283.500C1243,276 1247,274 1250,276.500S1255,280 1260.500,272.500" stroke="#5b3322" stroke-width="1.700"/>
<!-- points -->
<path d="M1248.500,299.500l4,4m0,-4l-4,4M1243.500,310l4,4m0,-4l-4,4M1253.500,308l4,4m0,-4l-4,4" stroke="#9b4a1b" stroke-width="1.400"/>
<path d="M1267.500,304.500H1274.500L1271,308.200Z" fill="#000"/>
<!-- csys -->
<path d="M1241,336.500H1254" stroke="#c87a30" stroke-width="1.200"/><path d="M1245.500,329L1254,343M1254,327.500L1246.500,343.500" stroke="#8a4018" stroke-width="1.400"/>
<path d="M1241,325l1.800,3l1.800,-3M1242.800,328v2M1241,341h3.500l-3.500,3.500h3.500M1256,333.500l3.500,3.500m0,-3.500l-3.500,3.500" stroke="#4d6b8d" stroke-width="1"/>
<!-- analysis -->
<path d="M1245,359l4,4m0,-4l-4,4" stroke="#8a4018" stroke-width="1.400"/><path d="M1250.500,353.500l1.500,3M1253,359l1.500,3.500" stroke="#5b3322" stroke-width="1.500"/>
<rect x="1242.500" y="365.500" width="16.500" height="7" fill="#d3e76a" stroke="#8b9a3c"/><path d="M1245.500,368v4M1248.500,368v4M1251.500,368v4M1254.500,368v4M1257,368v4" stroke="#6f7a2a" stroke-width=".9"/>
<!-- chain -->
<g stroke="#8a4a1e" stroke-width="1.300" fill="#fbefe2"><rect x="-5" y="-2.600" width="10" height="5.200" rx="2.600" transform="translate(1246.500,396) rotate(-42)"/><rect x="-5" y="-2.600" width="10" height="5.200" rx="2.600" transform="translate(1255.500,387) rotate(-42)"/></g>
<path d="M1242,400.500l3,-3M1248,394l6,-5.500M1257.500,385.500l3,-3" stroke="#6a3512" stroke-width="1.500"/>
<!-- annotation -->
<rect x="1241.500" y="423.500" width="12.500" height="8" fill="#ffffa2" stroke="#8d8d46"/>
<path d="M1254,427.500h6.500l-7,11.500" stroke="#000" stroke-width="1.200"/><path d="M1252,441l1,-4.200l2.600,1.600Z" fill="#000" stroke="#000" stroke-width=".5"/>
<!-- annotation disabled -->
<g stroke="#aaa9a0"><rect x="1241.500" y="450.500" width="10" height="5"/><path d="M1251.500,453h4l-2,4"/><rect x="1245.500" y="458.500" width="10" height="5"/><path d="M1255.500,461h4l-3.500,7.500l-.5,-2.500"/></g>
<!-- hole disabled -->
<path d="M1242,495.500Q1247,495.500 1248.500,498V506.500H1254.500V498Q1256,495.500 1261,495.500" stroke="#adaca3"/>
<!-- shell disabled -->
<g stroke="#a2a198"><path d="M1242.500,524.500l3,-3h13.500v12.500l-3,3.500h-13.500z"/><path d="M1242.500,524.500h13.500v13M1256,524.500l3,-3"/><rect x="1246.500" y="527.500" width="6.500" height="6.500"/></g>
<!-- rib disabled -->
<g stroke="#a2a198"><path d="M1242.500,553.500V566.500H1254" stroke-dasharray="1.500 1.500"/><path d="M1242.500,553.500l6,-6.500M1254,566.500l6,-7"/><path d="M1246,552.500v9.500h9.500Z" stroke="#8d8c84" stroke-width="1.300"/><path d="M1248.500,557.500v3h3.500z"/></g>
<!-- draft -->
<path d="M1248,576.500H1254L1259.500,588L1254.500,593.500H1241.500" fill="#a6f3f5" stroke="#228f94"/>
<path d="M1241.500,581.500H1249.500V589.500H1241.500" stroke="#228f94"/><path d="M1249.500,581.500L1254.500,593.500M1254,576.500L1249.500,581.500M1241.500,593.500H1254.500" stroke="#1d7f86" stroke-width="1.200"/>
<!-- round -->
<path d="M1242.500,612.500H1250V622.500H1242.500Z" fill="#e6e5dc" stroke="none"/>
<path d="M1245,605.500C1254,605 1259.500,611 1259.500,618.500L1254.500,622.500C1254.500,614 1252,610.500 1246.500,609Z" fill="#a6f3f5" stroke="#2b9298"/>
<path d="M1259.500,618.500V623l-5,3.500v-4Z" fill="#a9a9a2" stroke="none"/>
<!-- chamfer -->
<path d="M1242.500,642.500H1250V652H1242.500Z" fill="#e6e5dc" stroke="none"/>
<path d="M1245,633.500H1252L1259.500,641.500L1254.500,646L1247.500,638Z" fill="#a6f3f5" stroke="#2b9298"/>
<path d="M1259.500,641.500V648l-5,4v-6Z" fill="#a9a9a2" stroke="none"/>
<!-- extrude -->
<rect x="1242.500" y="681.500" width="8" height="8.500" fill="#a6f3f5" stroke="#2b7c8c" stroke-width="1.200"/>
<path d="M1242.500,681.500L1251,673.500H1259V681.500L1250.500,690M1250.500,681.500L1258.500,674" stroke="#2b7c8c" stroke-dasharray="2.200 1.200"/><path d="M1254.500,673.500H1259V678" stroke="#2b7c8c" stroke-width="1.200"/>
<!-- revolve -->
<circle cx="1245.700" cy="710.200" r="3" fill="#c9f8f8" stroke="#2b7c8c"/><circle cx="1257.300" cy="710.200" r="3" fill="#9cecf0" stroke="#2b7c8c"/>
<path d="M1251.500,700V719.500" stroke="#000" stroke-width="1.100" stroke-dasharray="3 1.200 1 1.200"/><path d="M1253.500,704.500q3,.5 4,2.500" stroke="#2b7c8c"/>
<!-- sweep blend -->
<path d="M1241.500,733.500L1246.500,728.500L1249,734.500Z" fill="#7fe6ea" stroke="#2b7c8c"/>
<path d="M1249,734.500Q1254,738 1259.500,735.500V746.500H1248Q1249.500,739 1241.500,733.500Z" fill="#d7f6f8" stroke="#2b7c8c"/>
<path d="M1241.500,733.500Q1249.500,739 1248,746.500H1259.500Z" fill="#a8c9cc" stroke="#2b7c8c"/>
<!-- boundary blend -->
<path d="M1241.500,771.500Q1243,760 1253.500,757.500L1260.500,762Q1256,768 1254.500,774.500Q1249,768 1241.500,771.500Z" fill="#dffafa" stroke="#2b7c8c"/>
<path d="M1247.500,760.500Q1251,763.500 1257,767.500M1243.500,765Q1249,764 1253.500,757.500" stroke="#2b7c8c"/><path d="M1250,764.500L1254.500,761.500L1258.500,764.500Q1256,768 1254.500,773Q1252.500,770.500 1249.500,769.500Z" fill="#8deaee" stroke="#2b7c8c" stroke-width=".8"/>
<!-- style -->
<path d="M1243.500,801.500Q1242.500,790.500 1246.500,787.500Q1252.500,785.500 1258.500,787.500V800.500Q1250.500,796 1243.500,801.500Z" fill="#d9f9f9" stroke="#4d7178" stroke-width="1.200"/>
<!-- column 2: mirror -->
<path d="M1283,187.500Q1289,188 1289.500,196.500V203H1283" fill="#fbf4ff" stroke="#6a3fa6" stroke-width="1"/>
<path d="M1302,187.500Q1296,188 1295.500,196.500V203H1302" fill="#fbf4ff" stroke="#6a3fa6" stroke-width="1"/>
<path d="M1292.500,185V204" stroke="#222" stroke-width="1.200"/>
<!-- merge / trim disabled -->
<g stroke="#a6a59c"><circle cx="1289.500" cy="223.500" r="5.800"/><rect x="1289.500" y="214.500" width="11.500" height="11.500"/><circle cx="1289.500" cy="251.500" r="5.800"/><rect x="1289.500" y="242.500" width="11.500" height="11.500"/></g>
<!-- pattern -->
<path d="M1283.500,271.500l2,-2.500h15.500v15l-2,2.500Z" fill="#b48ad0" stroke="#6a3fa6"/>
<rect x="1283.500" y="271.500" width="15.500" height="15" fill="#f6e4fb" stroke="#6a3fa6" stroke-width="1.200"/>
<path d="M1286.500,275h2M1290.500,275h2M1294.500,275h2M1286.500,279h2M1290.500,279h2M1294.500,279h2M1286.500,283h2M1290.500,283h2M1294.500,283h2" stroke="#8b2fb0" stroke-width="1.800"/>
</svg>

<!-- RTB-ICONS-END -->
<!-- status -->
<div id="status" class="abs"></div>
<div class="abs" style="left:969px;top:839px;width:1px;height:23px;background:#fff"></div>
<div class="abs" style="left:968px;top:839px;width:1px;height:23px;background:#c9c5b4"></div>
<div class="tr" style="left:975px;top:841px"><span class="c">选取了</span><span class="m mr">1</span></div>
<div class="abs" style="left:1066px;top:842px;width:180px;height:18px;background:#fff;border:1px solid #8a929e"></div>
<div class="abs" style="left:1248px;top:838px;width:1px;height:24px;background:#bdbaa9"></div><div class="abs" style="left:1249px;top:838px;width:1px;height:24px;background:#fbfaf4"></div>
<div class="tr c" style="left:1071px;top:844px">智能</div>
<div class="abs" style="left:1229px;top:844px;width:15px;height:14px;background:linear-gradient(#d5e0fb,#b9c9f5);border-radius:2px;border:1px solid #c4d2f8"></div>
<svg width="14" height="24" viewBox="1254 838 14 24" style="left:1254px;top:838px" fill="none"><rect x="1259.500" y="841.500" width="4" height="4" fill="#e89a8a" stroke="#9a6a5a" stroke-width=".8"/><rect x="1259.500" y="846.500" width="4" height="4" fill="#e8d89a" stroke="#9a8a5a" stroke-width=".8"/><circle cx="1261.500" cy="855.500" r="4" fill="#2fb23a" stroke="#0f6a18"/><circle cx="1260.500" cy="854.300" r="1.300" fill="#9fe8a4"/></svg>
<svg width="15" height="14" viewBox="0 0 15 14" style="left:1229px;top:844px" fill="none"><path d="M4,5l3.500,3.500l3.500,-3.500" stroke="#4d6185" stroke-width="2"/></svg>

</div>

<div class="abs" style="left:0;top:30px;width:1px;height:836px;background:#0019c0"></div>
<div class="abs" style="left:1px;top:30px;width:1px;height:836px;background:#0831d0"></div>
<div class="abs" style="left:2px;top:30px;width:1px;height:834px;background:#2560f0"></div>
<div class="abs" style="left:3px;top:30px;width:1px;height:833px;background:#1a4cc0"></div>
<div class="abs" style="left:4px;top:30px;width:1px;height:832px;background:#dfe5fb"></div>
<div class="abs" style="left:1305px;top:30px;width:1px;height:832px;background:#e4edfb"></div>
<div class="abs" style="left:1306px;top:30px;width:1px;height:833px;background:#0a3cb0"></div>
<div class="abs" style="left:1307px;top:30px;width:1px;height:834px;background:#0b3cc0"></div>
<div class="abs" style="left:1308px;top:30px;width:1px;height:835px;background:#08208c"></div>
<div class="abs" style="left:1309px;top:26px;width:1px;height:840px;background:#00055e"></div>
<div class="abs" style="left:4px;top:861px;width:1302px;height:1px;background:#eef0fc"></div>
<div class="abs" style="left:3px;top:862px;width:1304px;height:1px;background:#0a3cb8"></div>
<div class="abs" style="left:2px;top:863px;width:1306px;height:1px;background:#0a3cc8"></div>
<div class="abs" style="left:1px;top:864px;width:1308px;height:1px;background:#0520a8"></div>
<div class="abs" style="left:0;top:865px;width:1310px;height:1px;background:#001090"></div>
<div class="abs" style="left:897px;top:0;width:236px;height:1px;background:#f4f6fa"></div><div class="abs" style="left:897px;top:1px;width:236px;height:1px;background:rgba(90,100,130,.55)"></div>
<div id="task" class="abs"></div>
<div id="start" class="abs"><span class="abs s">开始</span>
<svg width="24" height="22" viewBox="0 0 24 22" style="left:9px;top:4px"><g transform="skewX(-6)"><path d="M4.500,2.500Q7.500,.8 11,2.800L10,9.200Q7,7.600 3.500,9Z" fill="#e4572e"/><path d="M12.500,3.300Q16,5 19.500,3.200L18.500,9.600Q15,11.200 11.500,9.700Z" fill="#8fc63c"/><path d="M3.200,10.700Q6.500,9.200 9.700,10.900L8.700,17.300Q5.500,15.700 2.200,17.200Z" fill="#4a8fe0"/><path d="M11.200,11.400Q14.500,13 18.200,11.300L17.200,17.700Q13.500,19.300 10.200,17.800Z" fill="#f4c22f"/></g></svg>
</div>
<div class="tgrip" style="left:107px"></div>
<svg id="ql" width="110" height="24" viewBox="114 874 110 24" style="left:114px;top:874px" fill="none">
<rect x="120.500" y="878.500" width="11" height="12" rx="2" fill="#f4f7fb" stroke="#1a3a8a" transform="rotate(-8 126 884)"/><path d="M123,882h5M123,885h6M123,888h4" stroke="#3a5ab0"/><path d="M127,888l5,-7" stroke="#1a1a1a" stroke-width="1.600"/>
<rect x="142.500" y="877.500" width="15" height="15" fill="#8fc41c" stroke="#6f9c10"/><path d="M145,880h10v6q0,4 -5,6q-5,-2 -5,-6z" fill="#fff" stroke="#3a6a10" stroke-width=".8"/><path d="M150,881.500v7M146.500,885h7" stroke="#2f7a14" stroke-width="2"/>
<circle cx="173" cy="885" r="7.500" fill="#3fb24a" stroke="#d9f2d9" stroke-width="1.400"/><path d="M169,885.500h8q0,-4 -4,-4t-4,4q0,4 4,4q2.500,0 3.500,-1.800" stroke="#fff" stroke-width="1.800"/>
<path d="M197,876l3,2.500l-3,2.500M201.500,876l3,2.500l-3,2.500" stroke="#cfe0fb" stroke-width="1.200"/>
</svg>
<div class="tgrip" style="left:214px"></div>
<div class="tbtn" style="left:222px;width:159px;background:linear-gradient(#1a49a8 0,#1e52b7 12%,#2158c2 60%,#2259c4 100%);box-shadow:inset 1px 1px 1px #163f94">
 <div class="abs" style="left:12px;top:7px;width:12px;height:12px;background:#7fe0e0;border:1px solid #2f8f95;border-right-width:2px"></div>
 <span class="tx" style="left:30px"><span class="m">PRT0001 (</span><span class="c">活动的</span><span class="m">)...</span></span></div>
<div class="tbtn" style="left:384px;width:157px;background:linear-gradient(#5a97f7 0,#3f84f3 10%,#3a7eef 50%,#3576e6 90%,#2c68d6 100%);box-shadow:inset 0 1px 0 #7ab0fb">
 <svg width="18" height="18" viewBox="0 0 18 18" style="left:7px;top:3px"><path d="M9,1.500l2,1.500h3.500v3.500l1.500,2l-1.500,2v3.500h-3.500l-2,1.500l-2,-1.500h-3.500v-3.500l-1.500,-2l1.500,-2v-3.500h3.500z" fill="#1a2a7a"/><rect x="4.500" y="4.500" width="9" height="8" fill="#f4f4ff" stroke="#0a1550"/><path d="M6,7h4M6,9h6M6,11h3" stroke="#2a3a9a"/></svg>
 <span class="tx m" style="left:28px">C:\Documents and...</span></div>
<div class="tbtn" style="left:544px;width:157px;background:linear-gradient(#5a97f7 0,#3f84f3 10%,#3a7eef 50%,#3576e6 90%,#2c68d6 100%);box-shadow:inset 0 1px 0 #7ab0fb">
 <svg width="18" height="18" viewBox="0 0 18 18" style="left:7px;top:4px"><circle cx="9" cy="9" r="7.500" fill="#3fb24a" stroke="#d9f2d9" stroke-width="1.400"/><path d="M5,9.500h8q0,-4 -4,-4t-4,4q0,4 4,4q2.500,0 3.500,-1.800" stroke="#fff" stroke-width="1.800" fill="none"/></svg>
 <span class="tx" style="left:28px"><span class="m">hao123--</span><span class="c">我的上</span><span class="m">..</span></span></div>
<div class="abs" style="left:622px;top:866px;white-space:nowrap;font-family:'Liberation Serif',serif;font-weight:bold;font-size:24px;line-height:28px;color:#c8405a;-webkit-text-stroke:1.400px #c9c6f4;paint-order:stroke fill;transform-origin:0 0;transform:scaleX(.888)" id="wm">BBS.CHINADE.NET</div>
<div class="tgrip" style="left:1126px"></div>
<div class="tr m" style="left:1139px;top:880px;color:#fff">CH</div>
<svg id="kb" width="40" height="20" viewBox="1156 874 40 20" style="left:1156px;top:874px" fill="none">
<rect x="1159.500" y="881.500" width="15" height="9" rx="1" fill="#f2f2ea" stroke="#26262a"/><path d="M1161,884h12M1161,886h12" stroke="#444" stroke-dasharray="1 1"/><path d="M1163,888.500h8" stroke="#444"/><path d="M1163,881v-2q0,-1.500 4,-1.500" stroke="#222"/>
<rect x="1183" y="878" width="2" height="12" fill="#fff"/>
</svg>
<div class="tgrip" style="left:1192px"></div>
<div class="tr c" style="left:1200px;top:877px;color:#a9c6f6">桌面</div>
<svg width="12" height="8" viewBox="0 0 12 8" style="left:1232px;top:875px" fill="none"><path d="M1,1l3,2.500l-3,2.500M5.500,1l3,2.500l-3,2.500" stroke="#cfe0fb" stroke-width="1.200"/></svg>
<div id="tray" class="abs"></div>
<svg id="trayic" width="140" height="22" viewBox="1262 874 140 22" style="left:1262px;top:874px" fill="none">
<circle cx="1274" cy="885" r="8" fill="#d81e2a" stroke="#8a0c14"/><path d="M1270,881h6l-5,4q6,-1 5.500,2.500q-.5,3 -6,2M1277,880l1.500,1.500" stroke="#fff" stroke-width="1.500"/>
<rect x="1284.500" y="877.500" width="6" height="15" fill="#f2d24a" stroke="#8a6a10"/><circle cx="1293" cy="882" r="3.200" fill="#f4e2c4" stroke="#8a6a4a" stroke-width=".8"/><circle cx="1295" cy="888.500" r="5" fill="#d8242c" stroke="#8a0c14" stroke-width=".8"/><path d="M1292,888.500h6" stroke="#fff" stroke-width="2"/>
<circle cx="1309" cy="884" r="6.500" fill="#8a8d92" stroke="#4a4c52"/><circle cx="1309" cy="884" r="3" fill="#d8dade" stroke="#5a5c62"/><path d="M1313,892l5,-5" stroke="#9ab0d8" stroke-width="1.500"/>
<rect x="1320" y="878" width="16" height="13" fill="#d8141c"/><text x="1321" y="888.500" font-family="Liberation Sans,sans-serif" font-size="9.500" font-weight="bold" font-style="italic" fill="#fff" letter-spacing="-.6">ATI</text>
<rect x="1338.500" y="877.500" width="15" height="15" fill="#1a2ad8" stroke="#e8ecff"/><path d="M1342.500,880.500v9l8,-4.500z" fill="#fff"/>
<rect x="1356.500" y="877.500" width="15" height="15" rx="2" fill="#1c5ac8" stroke="#103a8a"/><path d="M1358.500,881q2,-1 3,1.500t2.500,5.500q2,-5 5.500,-7.500M1358.500,881h9" stroke="#e8f2ff" stroke-width="1.400"/>
<rect x="1374.500" y="877.500" width="15" height="15" fill="#8fc41c" stroke="#6f9c10"/><path d="M1377,880h10v6q0,4 -5,6q-5,-2 -5,-6z" fill="#fff" stroke="#3a6a10" stroke-width=".8"/><path d="M1382,881.500v7M1378.500,885h7" stroke="#2f7a14" stroke-width="2"/>
</svg>
<div class="tr m" style="left:1396px;top:880px;color:#fff">13:42</div>

</body>
</html>
